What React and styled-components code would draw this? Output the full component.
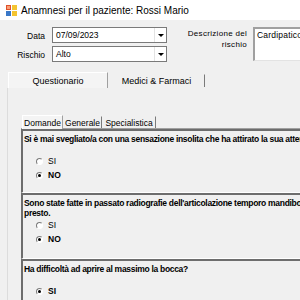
import React from "react";
import styled, { createGlobalStyle } from "styled-components";

const Global = createGlobalStyle`
  html, body {
    margin: 0;
    padding: 0;
    width: 300px;
    height: 300px;
    overflow: hidden;
    background: #f0f0f0;
  }
  * { box-sizing: border-box; }
`;

const Window = styled.div`
  width: 520px;
  background: #f0f0f0;
  font-family: "Liberation Sans", Arial, sans-serif;
  color: #000;
  display: flex;
  flex-direction: column;
  & > * { flex-shrink: 0; }
`;

const TitleBar = styled.div`
  height: 20px;
  background: #fff;
  display: flex;
  align-items: center;
  padding-left: 6px;
  gap: 4px;
  font-size: 10px;
`;

const Form = styled.div`
  display: flex;
  padding-top: 7px;
  height: 52px;
`;

const FieldGrid = styled.div`
  display: grid;
  grid-template-columns: 45px 115px;
  grid-auto-rows: 16px;
  column-gap: 7px;
  row-gap: 3px;
  align-items: center;
`;

const Label = styled.label`
  font-size: 8.5px;
  text-align: right;
  padding-top: 2px;
`;

const Combo = styled.div`
  height: 16px;
  background: #fff;
  border: 1px solid #7a7a7a;
  display: flex;
  align-items: center;
  font-size: 8.5px;
  padding-left: 3px;
`;

const ComboText = styled.span`
  flex: 1;
`;

const ComboButton = styled.span`
  width: 12px;
  height: 14px;
  border-left: 1px solid #e3e3e3;
  display: flex;
  align-items: center;
  justify-content: center;
  &::after {
    content: "";
    border-left: 3px solid transparent;
    border-right: 3px solid transparent;
    border-top: 3px solid #000;
  }
`;

const DescLabel = styled.div`
  width: 80px;
  font-size: 8px;
  letter-spacing: 0.3px;
  line-height: 11px;
  text-align: right;
  padding-top: 1px;
`;

const TextArea = styled.div`
  margin-left: 6px;
  width: 120px;
  height: 34px;
  background: #fff;
  border-top: 2px solid #a0a0a0;
  border-left: 2px solid #a0a0a0;
  border-bottom: 1px solid #e3e3e3;
  font-size: 8.5px;
  letter-spacing: 0.2px;
  padding: 1px 2px;
`;

const TabStrip = styled.div`
  display: flex;
  align-items: flex-end;
  padding-left: ${(p) => p.$indent}px;
  height: ${(p) => p.$height}px;
  border-bottom: 1px solid ${(p) => p.$line};
`;

const Tab = styled.div`
  width: ${(p) => p.$w}px;
  height: ${(p) => (p.$active ? p.$h + 2 : p.$h)}px;
  display: flex;
  align-items: center;
  justify-content: center;
  font-size: ${(p) => p.$size}px;
  background: ${(p) => (p.$active ? "#f4f4f4" : "#f0f0f0")};
  border-right: 1px solid ${(p) => (p.$active ? "#a0a0a0" : "#7a7a7a")};
  border-left: 1px solid ${(p) => (p.$active ? "#fff" : "transparent")};
  border-top: 1px solid ${(p) => (p.$active ? "#fff" : "transparent")};
  margin-bottom: ${(p) => (p.$active ? -1 : 0)}px;
  white-space: nowrap;
`;

const OuterPage = styled.div`
  margin-left: 7px;
  border-left: 1px solid #dcdcdc;
  padding: 27px 0 0 13px;
  display: flex;
  flex-direction: column;
`;

const InnerPage = styled.div`
  display: flex;
  flex-direction: column;
`;

const Question = styled.div`
  height: ${(p) => p.$h}px;
  flex-shrink: 0;
  border-top: 2px solid #6d6d6d;
  border-left: 2px solid #6d6d6d;
  border-bottom: 1px solid #fff;
  padding: 3px 0 0 1px;
  display: flex;
  flex-direction: column;
  overflow: hidden;
`;

const QText = styled.div`
  height: 22px;
  font-weight: bold;
  font-size: 8.5px;
  line-height: 10px;
  letter-spacing: -0.3px;
  white-space: nowrap;
`;

const Options = styled.div`
  display: flex;
  flex-direction: column;
  gap: 4px;
  padding-left: 12px;
`;

const Option = styled.div`
  display: flex;
  align-items: center;
  gap: 5px;
  height: 10px;
  font-size: 8.5px;
  font-weight: ${(p) => (p.$on ? "bold" : "normal")};
`;

const Radio = styled.span`
  width: 7px;
  height: 7px;
  border-radius: 50%;
  border: 1px solid;
  border-color: #7a7a7a #fff #fff #7a7a7a;
  background: #fff;
  display: flex;
  align-items: center;
  justify-content: center;
  &::after {
    content: "";
    width: 3px;
    height: 3px;
    border-radius: 50%;
    background: ${(p) => (p.$on ? "#000" : "transparent")};
  }
`;

const AppIcon = () => (
  <svg width="11" height="11" viewBox="0 0 11 11">
    <rect x="0" y="0" width="5" height="5" fill="#e0502a" />
    <rect x="6" y="0" width="5" height="5" fill="#f4c430" />
    <rect x="0" y="6" width="5" height="5" fill="#3a78c8" />
    <rect x="6" y="6" width="5" height="5" fill="#f4c430" />
    <rect x="1" y="1" width="3" height="3" fill="#f7a07a" />
  </svg>
);

const questions = [
  {
    lines: ["Si è mai svegliato/a con una sensazione insolita che ha attirato la sua attenzione?"],
    answer: "NO",
    h: 64,
  },
  {
    lines: [
      "Sono state fatte in passato radiografie dell'articolazione temporo mandibolare, anche",
      "presto.",
    ],
    answer: "NO",
    h: 66,
  },
  {
    lines: ["Ha difficoltà ad aprire al massimo la bocca?"],
    answer: "SI",
    h: 60,
  },
];

export default function App() {
  return (
    <Window>
      <Global />
      <TitleBar>
        <AppIcon />
        <span>Anamnesi per il paziente: Rossi Mario</span>
      </TitleBar>

      <Form>
        <FieldGrid>
          <Label>Data</Label>
          <Combo>
            <ComboText>07/09/2023</ComboText>
            <ComboButton />
          </Combo>
          <Label>Rischio</Label>
          <Combo>
            <ComboText>Alto</ComboText>
            <ComboButton />
          </Combo>
        </FieldGrid>
        <DescLabel>
          Descrizione del
          <br />
          rischio
        </DescLabel>
        <TextArea>Cardipatico</TextArea>
      </Form>

      <TabStrip $indent={8} $height={16} $line="#f0f0f0">
        <Tab $active $w={100} $h={14} $size={9}>
          Questionario
        </Tab>
        <Tab $w={97} $h={13} $size={9}>
          Medici &amp; Farmaci
        </Tab>
      </TabStrip>

      <OuterPage>
        <TabStrip $indent={1} $height={14} $line="#a0a0a0">
          <Tab $active $w={41} $h={12} $size={8.5}>
            Domande
          </Tab>
          <Tab $w={39} $h={12} $size={8.5}>
            Generale
          </Tab>
          <Tab $w={54} $h={12} $size={8.5}>
            Specialistica
          </Tab>
        </TabStrip>
        <InnerPage>
          {questions.map((q, i) => (
            <Question key={i} $h={q.h}>
              <QText>
                {q.lines.map((l, j) => (
                  <div key={j}>{l}</div>
                ))}
              </QText>
              <Options>
                <Option $on={q.answer === "SI"}>
                  <Radio $on={q.answer === "SI"} />
                  SI
                </Option>
                <Option $on={q.answer === "NO"}>
                  <Radio $on={q.answer === "NO"} />
                  NO
                </Option>
              </Options>
            </Question>
          ))}
        </InnerPage>
      </OuterPage>
    </Window>
  );
}
